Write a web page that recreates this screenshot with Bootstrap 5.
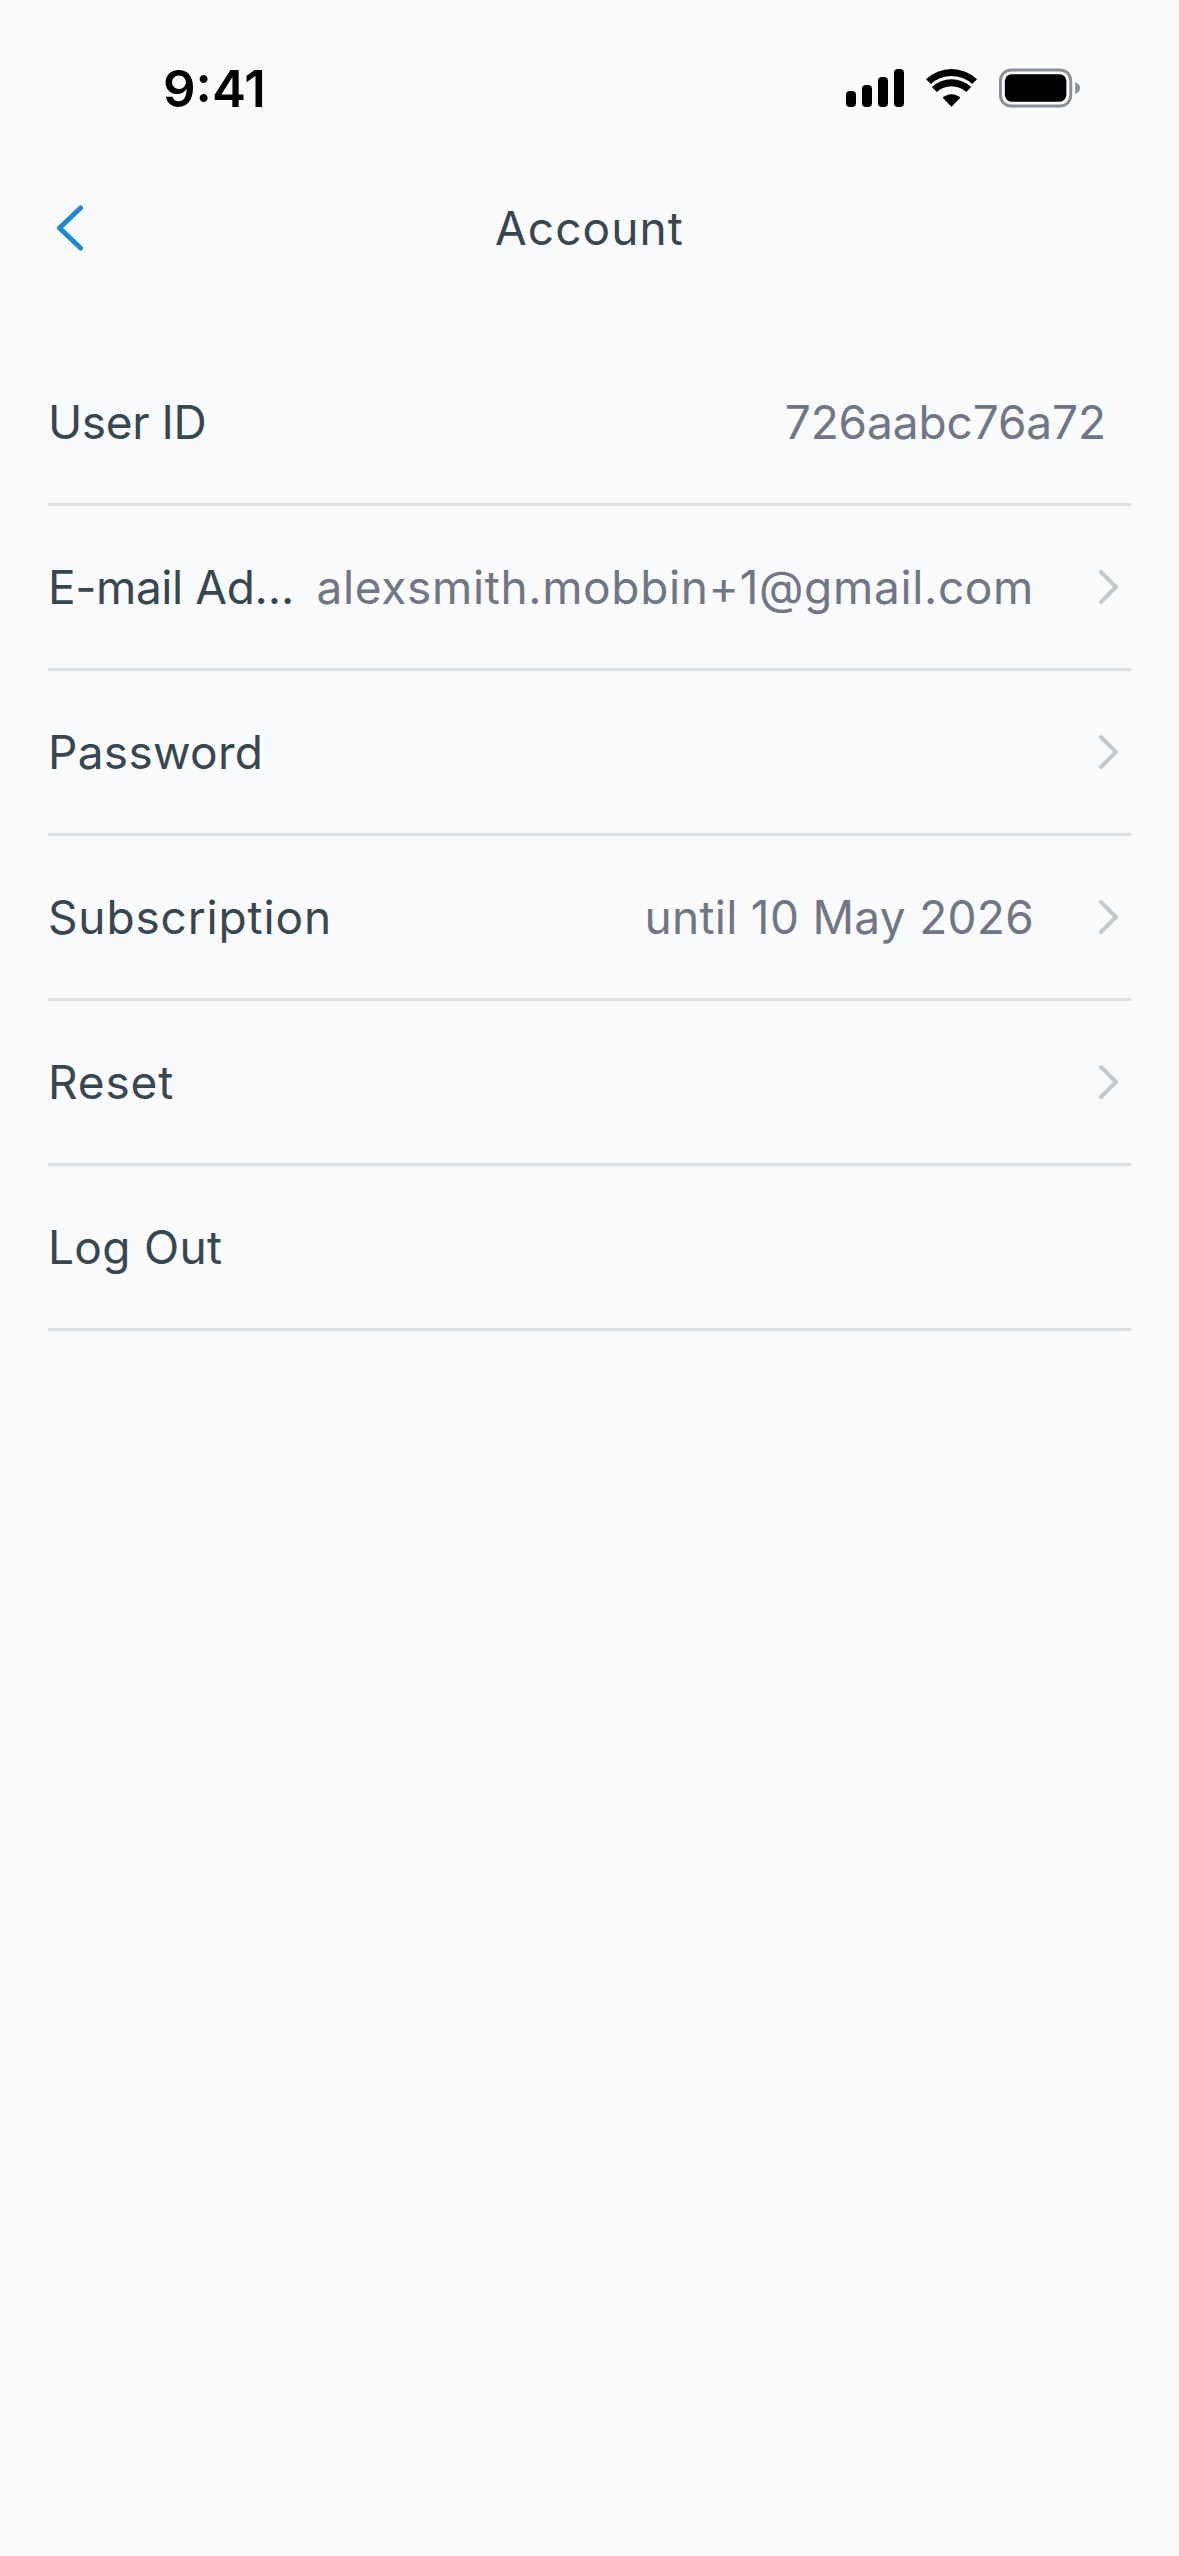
<!DOCTYPE html>
<html lang="en">

<head>
    <meta charset="UTF-8">
    <title>Account</title>
    <link href="https://cdn.jsdelivr.net/npm/bootstrap@5.3.0/dist/css/bootstrap.min.css" rel="stylesheet">
    <style>
        body {
            background-color: #f9fafc;
            font-family: Inter, "Liberation Sans", sans-serif;
            min-height: 2556px;
        }

        .status-bar {
            height: 130px;
            padding: 59px 98px 0 163px;
        }

        .status-time {
            font-size: 51px;
            font-weight: 600;
            line-height: 60px;
            color: #000;
        }

        .status-icons {
            gap: 22px;
            height: 40px;
            margin-top: 9px;
        }

        .top-bar {
            height: 197px;
            padding: 47px 57px 48px;
        }

        .top-bar-side {
            flex: 1 1 0;
        }

        .top-bar-title {
            font-size: 46px;
            letter-spacing: 1.1px;
            color: #37474f;
        }

        .account-list {
            margin: 14px 48px 0;
            background: transparent;
        }

        .account-list > .account-row,
        .account-list > .account-row:last-child {
            height: 165px;
            background: transparent;
            border: 0 solid #dcdfe2;
            border-bottom-width: 3px;
            padding: 0;
            font-size: 46px;
            letter-spacing: .3px;
            color: #37474f;
        }

        .row-value {
            color: #6f7685;
            flex-shrink: 0;
        }

        .id-value {
            letter-spacing: -.1px;
            padding-right: 25px;
        }

        .email-value {
            letter-spacing: .65px;
        }

        .wide-label {
            letter-spacing: .85px;
        }

        .tight-label {
            letter-spacing: -.4px;
        }

        .row-arrow {
            width: 97px;
            padding-right: 12px;
            flex-shrink: 0;
        }
    </style>
</head>

<body>
    <div class="status-bar d-flex justify-content-between">
        <div class="status-time">9:41</div>
        <div class="status-icons d-flex align-items-center">
            <svg width="58" height="38" viewBox="0 0 58 38">
                <rect x="0" y="22" width="10" height="16" rx="4" />
                <rect x="16" y="16" width="10" height="22" rx="4" />
                <rect x="32" y="8" width="10" height="30" rx="4" />
                <rect x="48" y="0" width="10" height="38" rx="4" />
            </svg>
            <svg width="51" height="38" viewBox="0 0 52 38">
                <path d="M26 38 17 29a13 13 0 0 1 18 0Z" />
                <path d="M11 23 6 18a29 29 0 0 1 40 0l-5 5a22 22 0 0 0-30 0Z" />
                <path d="M5 15 0 10a38 38 0 0 1 52 0l-5 5a31 31 0 0 0-42 0Z" />
            </svg>
            <svg width="82" height="40" viewBox="0 0 84 40">
                <rect x="1.5" y="1.5" width="72" height="37" rx="11" fill="none" stroke="#8b9098" stroke-width="3" />
                <rect x="6" y="6" width="63" height="28" rx="7" />
                <path d="M78 14c3 1 5 3 5 6s-2 5-5 6Z" fill="#8b9098" />
            </svg>
        </div>
    </div>

    <div class="top-bar d-flex align-items-center">
        <div class="top-bar-side">
            <svg width="30" height="48" viewBox="0 0 30 48" class="d-block">
                <path d="M23.500 4 2.500 24l21 20" fill="none" stroke="#1a8ad6" stroke-width="5" stroke-linecap="round" stroke-linejoin="round" />
            </svg>
        </div>
        <div class="top-bar-title">Account</div>
        <div class="top-bar-side"></div>
    </div>

    <ul class="list-group list-group-flush account-list">
        <li class="list-group-item account-row d-flex align-items-center justify-content-between">
            <span class="tight-label">User ID</span>
            <span class="row-value id-value">726aabc76a72</span>
        </li>
        <li class="list-group-item account-row d-flex align-items-center">
            <span class="flex-grow-1 tight-label">E-mail Ad…</span>
            <span class="row-value email-value">alexsmith.mobbin+1@gmail.com</span>
            <span class="row-arrow d-flex justify-content-end">
                <svg width="20" height="36" viewBox="0 0 20 36"><path d="M2 3l15 15L2 33" fill="none" stroke="#c2c8cc" stroke-width="4" stroke-linecap="round" stroke-linejoin="round" /></svg>
            </span>
        </li>
        <li class="list-group-item account-row d-flex align-items-center justify-content-between">
            <span>Password</span>
            <span class="row-arrow d-flex justify-content-end">
                <svg width="20" height="36" viewBox="0 0 20 36"><path d="M2 3l15 15L2 33" fill="none" stroke="#c2c8cc" stroke-width="4" stroke-linecap="round" stroke-linejoin="round" /></svg>
            </span>
        </li>
        <li class="list-group-item account-row d-flex align-items-center">
            <span class="flex-grow-1 wide-label">Subscription</span>
            <span class="row-value">until 10 May 2026</span>
            <span class="row-arrow d-flex justify-content-end">
                <svg width="20" height="36" viewBox="0 0 20 36"><path d="M2 3l15 15L2 33" fill="none" stroke="#c2c8cc" stroke-width="4" stroke-linecap="round" stroke-linejoin="round" /></svg>
            </span>
        </li>
        <li class="list-group-item account-row d-flex align-items-center justify-content-between">
            <span class="wide-label">Reset</span>
            <span class="row-arrow d-flex justify-content-end">
                <svg width="20" height="36" viewBox="0 0 20 36"><path d="M2 3l15 15L2 33" fill="none" stroke="#c2c8cc" stroke-width="4" stroke-linecap="round" stroke-linejoin="round" /></svg>
            </span>
        </li>
        <li class="list-group-item account-row d-flex align-items-center">
            <span>Log Out</span>
        </li>
    </ul>

    <script src="https://cdn.jsdelivr.net/npm/bootstrap@5.3.0/dist/js/bootstrap.bundle.min.js"></script>
</body>

</html>
